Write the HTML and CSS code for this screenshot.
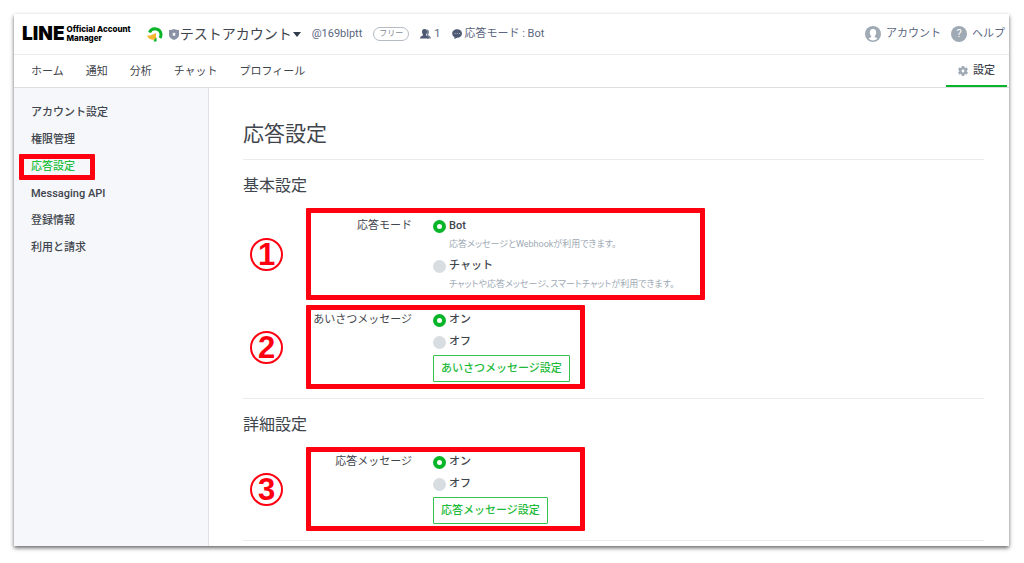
FILE: index.html
```html
<!DOCTYPE html>
<html lang="ja">
<head>
  <meta charset="UTF-8">
  <meta name="viewport" content="width=device-width, initial-scale=1">
  <title>応答設定 | LINE Official Account Manager</title>
  <link rel="stylesheet" href="styles.css">
</head>
<body>
  <div class="window">
    <header class="header">
      <a class="logo" href="#">
        <span class="logo-line">LINE</span>
        <span class="logo-sub">Official Account<br>Manager</span>
      </a>

      <button class="account-switch" type="button">
        <svg class="account-icon" viewBox="0 0 16 16" width="16" height="16" aria-hidden="true">
          <path d="M2.500 6.500A6 6 0 0 1 14 8.500c0 1.500-.4 2.500-1 3.500" fill="none" stroke="#08b428" stroke-width="3"/>
          <path d="M0 9.500h3.500L9 7v6.200C6 14.800 1.500 13.500 0 9.500z" fill="#f5b82e"/>
          <path d="M7.500 13.500l2-2v4H6.500z" fill="#08b428"/>
        </svg>
        <svg class="shield-icon" viewBox="0 0 10 11" width="10" height="11" aria-hidden="true">
          <path d="M0 1q3 0 5-1 2 1 5 1v5q0 3-5 5-5-2-5-5z" fill="#8a92a6"/>
          <path d="M5 3l.6 1.400 1.400.2-1 1 .3 1.500L5 6.400l-1.300.7.3-1.500-1-1 1.400-.2z" fill="#fff"/>
        </svg>
        <span class="account-name">テストアカウント</span>
        <svg viewBox="0 0 8 5" width="8" height="5" aria-hidden="true">
          <path d="M0 0h8L4 5z" fill="#2f3a4a"/>
        </svg>
      </button>

      <div class="account-info">
        <span>@169blptt</span>
        <span class="plan">フリー</span>
        <span class="info-item">
          <svg viewBox="0 0 11 10" width="11" height="10" aria-hidden="true">
            <path d="M6.500.5c2 0 2.500 1.200 2.500 2.500S8.500 5.200 8 5.800c0 .8 3 1 3 3.700H7z" fill="#7c869c"/>
            <path d="M4.500 0C6.500 0 7 1.400 7 2.800S6.400 5.200 5.900 5.900C5.900 6.800 9 7 9 9.500H0C0 7 3.100 6.800 3.100 5.900 2.600 5.200 2 4.200 2 2.800S2.500 0 4.500 0z" fill="#4e5a73"/>
          </svg>
          1
        </span>
        <span class="info-item">
          <svg viewBox="0 0 10 10" width="10" height="10" aria-hidden="true">
            <path d="M5.200.3C8 .3 10 2.100 10 4.500S8 8.800 5.200 8.800L2.300 10l.2-1.800C1.200 7.500.2 6.200.2 4.500.2 2.100 2.400.3 5.200.3z" fill="#4e5a73"/>
            <path d="M2.600 4.200h.8V5h-.8zM4.800 4.200h.8V5h-.8zM7 4.200h.8V5H7z" fill="#fff"/>
          </svg>
          応答モード : Bot
        </span>
      </div>

      <div class="header-links">
        <a href="#">
          <svg viewBox="0 0 16 16" width="16" height="16" aria-hidden="true">
            <circle cx="8" cy="8" r="8" fill="#a0aab5"/>
            <path d="M8 3c2.400 0 3.200 1.600 3.200 3.500S10.300 9.600 9.600 10.400c.1 1 1.900 1.200 2.900 2.200A6.500 6.500 0 0 1 8 14.500a6.500 6.500 0 0 1-4.500-1.900c1-1 2.800-1.200 2.900-2.200C5.700 9.600 4.800 8.400 4.800 6.500S5.600 3 8 3z" fill="#fff"/>
          </svg>
          アカウント
        </a>
        <a href="#"><span class="help-icon" aria-hidden="true">?</span>ヘルプ</a>
      </div>
    </header>

    <nav class="nav">
      <a href="#">ホーム</a>
      <a href="#">通知</a>
      <a href="#">分析</a>
      <a href="#">チャット</a>
      <a href="#">プロフィール</a>
      <a class="nav-settings" href="#">
        <svg viewBox="0 0 10 10" width="10" height="10" aria-hidden="true">
          <g fill="#a0aab5">
            <rect x="3.700" y="0" width="2.600" height="10"/>
            <rect x="3.700" y="0" width="2.600" height="10" transform="rotate(60 5 5)"/>
            <rect x="3.700" y="0" width="2.600" height="10" transform="rotate(120 5 5)"/>
            <circle cx="5" cy="5" r="3.800"/>
          </g>
          <circle cx="5" cy="5" r="1.400" fill="#fff"/>
        </svg>
        設定
      </a>
    </nav>

    <div class="content">
      <aside class="sidebar">
        <a href="#">アカウント設定</a>
        <a href="#">権限管理</a>
        <a class="active marked" href="#">応答設定</a>
        <a href="#">Messaging API</a>
        <a href="#">登録情報</a>
        <a href="#">利用と請求</a>
      </aside>

      <main class="main">
        <h1>応答設定</h1>

        <section class="section">
          <h2>基本設定</h2>
          <div class="step">
            <span class="step-number">1</span>
            <div class="field field-mode" role="radiogroup" aria-labelledby="modeLabel">
              <div class="field-label" id="modeLabel">応答モード</div>
              <div class="field-body">
                <label class="option"><input type="radio" name="mode" checked>Bot</label>
                <p class="option-note">応答メッセージとWebhookが利用できます。</p>
                <label class="option"><input type="radio" name="mode">チャット</label>
                <p class="option-note">チャットや応答メッセージ、スマートチャットが利用できます。</p>
              </div>
            </div>
          </div>

          <div class="step">
            <span class="step-number">2</span>
            <div class="field" role="radiogroup" aria-labelledby="greetingLabel">
              <div class="field-label" id="greetingLabel">あいさつメッセージ</div>
              <div class="field-body">
                <label class="option"><input type="radio" name="greeting" checked>オン</label>
                <label class="option"><input type="radio" name="greeting">オフ</label>
                <button class="btn" type="button">あいさつメッセージ設定</button>
              </div>
            </div>
          </div>
        </section>

        <section class="section">
          <h2>詳細設定</h2>
          <div class="step">
            <span class="step-number">3</span>
            <div class="field" role="radiogroup" aria-labelledby="replyLabel">
              <div class="field-label" id="replyLabel">応答メッセージ</div>
              <div class="field-body">
                <label class="option"><input type="radio" name="reply" checked>オン</label>
                <label class="option"><input type="radio" name="reply">オフ</label>
                <button class="btn" type="button">応答メッセージ設定</button>
              </div>
            </div>
          </div>
        </section>
      </main>
    </div>
  </div>
</body>
</html>
```
FILE: styles.css
```css
:root {
  --green: #08b428;
  --red: #ff0010;
  --text: #3f454c;
  --slate: #5b6680;
  --gray: #a0aab5;
  --line: #e9ebed;
}

* {
  box-sizing: border-box;
}

body {
  display: flex;
  min-height: 100vh;
  margin: 0;
  padding: 14px 15px 17px 14px;
  background: #fff;
  color: var(--text);
  font-family: Roboto, "Noto Sans CJK JP", sans-serif;
  font-size: 11px;
  line-height: 16px;
}

a {
  color: inherit;
  text-decoration: none;
}

button {
  font: inherit;
  cursor: pointer;
}

svg {
  flex: none;
}

.window {
  display: flex;
  flex-direction: column;
  flex: 1;
  min-width: 0;
  background: #fff;
  box-shadow: 0 2px 4px rgba(0, 0, 0, 0.6);
}

/* header */
.header {
  display: flex;
  align-items: center;
  height: 41px;
  padding: 0 4px 0 8px;
  border-bottom: 1px solid var(--line);
  color: var(--slate);
  white-space: nowrap;
}

.logo {
  display: flex;
  align-items: center;
  gap: 2px;
  color: #000;
  font-family: Inter, sans-serif;
  font-weight: 900;
}

.logo-line {
  font-size: 19px;
}

.logo-sub {
  font-size: 8px;
  font-weight: 800;
  line-height: 9px;
}

.account-switch {
  display: flex;
  align-items: center;
  margin-left: 16px;
  padding: 0;
  border: 0;
  background: none;
  color: var(--text);
}

.account-icon {
  margin-right: 6px;
}

.account-name {
  margin: 0 1px;
  font-size: 14px;
}

.account-info {
  display: flex;
  align-items: center;
  gap: 11px;
  margin-left: 11px;
}

.plan {
  padding: 0 5px;
  border: 1px solid #b4bbc4;
  border-radius: 7px;
  color: #7f8994;
  font-size: 8px;
  line-height: 12px;
}

.info-item {
  display: flex;
  align-items: center;
  gap: 3px;
}

.header-links {
  display: flex;
  gap: 10px;
  margin-left: auto;
}

.header-links a {
  display: flex;
  align-items: center;
  gap: 5px;
}

.help-icon {
  width: 16px;
  border-radius: 50%;
  background: var(--gray);
  color: #fff;
  text-align: center;
}

/* navigation */
.nav {
  display: flex;
  gap: 22px;
  height: 33px;
  padding: 0 2px 0 17px;
  border-bottom: 1px solid #dcdfe2;
  line-height: 34px;
}

.nav-settings {
  display: flex;
  align-items: center;
  gap: 5px;
  margin-left: auto;
  padding: 0 12px;
  box-shadow: inset 0 -2px var(--green);
  font-weight: 500;
}

.content {
  display: flex;
  flex: 1;
}

.sidebar {
  display: flex;
  flex-direction: column;
  align-items: flex-start;
  gap: 1px;
  width: 195px;
  padding: 12px 5px;
  border-right: 1px solid #dfe2e6;
  background: #f5f7fa;
  font-weight: 500;
}

.sidebar a {
  padding: 0 15px 0 7px;
  border: 5px solid transparent;
}

.sidebar .active {
  color: #24bf40;
}

.sidebar .marked {
  border-color: var(--red);
  border-radius: 1px;
}

/* main */
.main {
  flex: 1;
  padding: 34px 25px 0 34px;
}

h1 {
  margin: 0;
  padding-bottom: 13px;
  border-bottom: 1px solid var(--line);
  font-size: 21px;
  font-weight: 400;
  line-height: 24px;
}

h2 {
  margin: 0 0 12px;
  font-size: 16px;
  font-weight: 400;
  line-height: 20px;
}

.section {
  padding: 16px 0 9px;
  border-bottom: 1px solid var(--line);
}

.step {
  display: flex;
  align-items: center;
  gap: 23px;
  padding-left: 7px;
}

.step + .step {
  margin-top: 5px;
}

.step-number {
  flex: none;
  width: 33px;
  border: 2px solid var(--red);
  border-radius: 50%;
  color: var(--red);
  font-family: "Liberation Sans", sans-serif;
  font-size: 31px;
  font-weight: 700;
  line-height: 29px;
  text-align: center;
}

.field {
  display: flex;
  gap: 21px;
  width: 279px;
  padding: 2px 0;
  border: 5px solid var(--red);
  border-radius: 1px;
}

.field-mode {
  width: 399px;
  padding: 5px 0 4px;
}

.field-label {
  flex: none;
  width: 101px;
  text-align: right;
}

.option {
  display: flex;
  align-items: center;
  gap: 3px;
  font-weight: 500;
}

.option + .option {
  margin-top: 6px;
}

.option input {
  width: 13px;
  height: 13px;
  margin: 0;
  border-radius: 50%;
  background: #d8dde2;
  appearance: none;
}

.option input:checked {
  border: 4px solid var(--green);
  background: #fff;
}

.option-note {
  margin: 3px 0 0 16px;
  color: var(--gray);
  font-size: 9px;
  font-feature-settings: "palt";
  line-height: 14px;
  white-space: nowrap;
}

.option-note + .option {
  margin-top: 7px;
}

.btn {
  height: 27px;
  margin-top: 5px;
  padding: 0 7px;
  border: 1px solid #35c24d;
  border-radius: 1px;
  background: #fff;
  color: #1dba39;
  font-weight: 500;
}
```
